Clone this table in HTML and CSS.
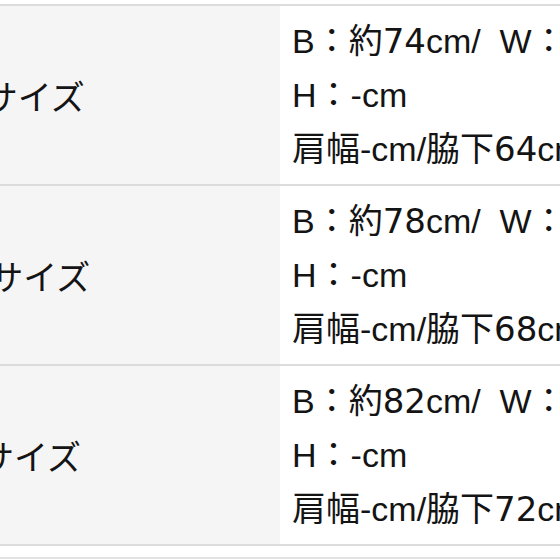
FILE: index.html
```html
<!DOCTYPE html>
<html lang="ja">
<head>
<meta charset="utf-8">
<link rel="stylesheet" href="styles.css">
</head>
<body>
<div class="sheet">
  <div class="row">
    <div class="label">Sサイズ</div>
    <div class="value">
      <div class="line">B：約<span class="num">74</span>cm/&nbsp; W：-cm</div>
      <div class="line">H：-cm</div>
      <div class="line">肩幅-cm/脇下<span class="num">64</span>cm</div>
    </div>
  </div>
  <div class="row">
    <div class="label">Mサイズ</div>
    <div class="value">
      <div class="line">B：約<span class="num">78</span>cm/&nbsp; W：-cm</div>
      <div class="line">H：-cm</div>
      <div class="line">肩幅-cm/脇下<span class="num">68</span>cm</div>
    </div>
  </div>
  <div class="row">
    <div class="label">Lサイズ</div>
    <div class="value">
      <div class="line">B：約<span class="num">82</span>cm/&nbsp; W：-cm</div>
      <div class="line">H：-cm</div>
      <div class="line">肩幅-cm/脇下<span class="num">72</span>cm</div>
    </div>
  </div>
</div>
<div class="next"></div>
</body>
</html>
```
FILE: styles.css
```css
html, body {
  margin: 0;
  padding: 0;
  overflow: hidden;
  background: #ffffff;
}
body {
  padding-top: 4px;
  width: 560px;
  height: 560px;
  box-sizing: border-box;
  font-family: "Liberation Sans", "Noto Sans CJK JP", sans-serif;
  color: #141414;
}
.sheet {
  margin-left: -60px;
  width: 680px;
  border-bottom: 2px solid #dcdcdc;
}
.row {
  display: grid;
  grid-template-columns: 340px 340px;
  border-top: 2px solid #dcdcdc;
  min-height: 178px;
}
.label {
  background: #f5f5f5;
  display: flex;
  align-items: center;
  padding-left: 21px;
  font-size: 34px;
  white-space: nowrap;
}
.value {
  background: #ffffff;
  padding: 8px 0 8px 12px;
  font-size: 34px;
  white-space: nowrap;
}
.line {
  height: 54px;
  line-height: 54px;
}
.num {
  font-family: "DejaVu Sans", "Liberation Sans", sans-serif;
}
.next {
  margin-top: 11px;
  border-top: 2px solid #e2e2e2;
}
```
